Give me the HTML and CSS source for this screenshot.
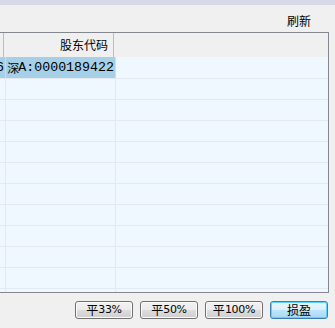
FILE: index.html
```html
<!DOCTYPE html>
<html>
<head>
<meta charset="utf-8">
<link rel="stylesheet" href="styles.css">
</head>
<body>
<div class="topbar"></div>
<div class="toolbar"><span class="refresh">刷新</span></div>
<div class="grid">
  <div class="hdr">
    <div class="h1"></div>
    <div class="h2">股东代码</div>
    <div class="h3"></div>
  </div>
  <div class="rows">
    <div class="row first">
      <div class="c1 sel cut"><span>6</span></div>
      <div class="c2 sel"><span class="cjk">深</span><span class="mono">A:0000189422</span></div>
      <div class="c3"></div>
    </div>
    <div class="row"><div class="c1"></div><div class="c2"></div><div class="c3"></div></div>
    <div class="row"><div class="c1"></div><div class="c2"></div><div class="c3"></div></div>
    <div class="row"><div class="c1"></div><div class="c2"></div><div class="c3"></div></div>
    <div class="row"><div class="c1"></div><div class="c2"></div><div class="c3"></div></div>
    <div class="row"><div class="c1"></div><div class="c2"></div><div class="c3"></div></div>
    <div class="row"><div class="c1"></div><div class="c2"></div><div class="c3"></div></div>
    <div class="row"><div class="c1"></div><div class="c2"></div><div class="c3"></div></div>
    <div class="row"><div class="c1"></div><div class="c2"></div><div class="c3"></div></div>
    <div class="row"><div class="c1"></div><div class="c2"></div><div class="c3"></div></div>
    <div class="row"><div class="c1"></div><div class="c2"></div><div class="c3"></div></div>
    <div class="row"><div class="c1"></div><div class="c2"></div><div class="c3"></div></div>
  </div>
</div>
<div class="btns">
  <button class="btn"><span class="cjk">平</span><span class="lat">33%</span></button>
  <button class="btn"><span class="cjk">平</span><span class="lat">50%</span></button>
  <button class="btn"><span class="cjk">平</span><span class="lat">100%</span></button>
  <button class="btn focus"><span class="cjk">损盈</span></button>
</div>
</body>
</html>
```
FILE: styles.css
```css
html, body {
  margin: 0;
  padding: 0;
}
body {
  width: 335px;
  height: 328px;
  overflow: hidden;
  background: #f0f0f0;
  font-family: "Noto Sans CJK SC", "Liberation Sans", sans-serif;
  font-size: 12px;
  color: #000;
}
.topbar {
  height: 5px;
  background: #d8d9e8;
}
.toolbar {
  height: 27px;
  box-sizing: border-box;
  padding: 9px 24px 0 0;
  line-height: 14px;
  display: flex;
  justify-content: flex-end;
}
.grid {
  height: 261px;
  box-sizing: border-box;
  margin-right: 6px;
  border-top: 1px solid #828790;
  border-right: 1px solid #828790;
  border-bottom: 1px solid #828790;
  overflow: hidden;
  display: flex;
  flex-direction: column;
}
.hdr {
  height: 24px;
  flex: none;
  display: grid;
  grid-template-columns: 4px 110px 1fr;
  background: #f0f0f0;
  line-height: 24px;
}
.h1, .h2 {
  border-right: 1px solid #bdbdbd;
}
.h2 {
  text-align: right;
  padding-right: 5px;
}
.rows {
  flex: 1;
  background: #f0f8ff;
  overflow: hidden;
}
.row {
  height: 20px;
  display: grid;
  grid-template-columns: 6px 110px 1fr;
  border-bottom: 1px solid #e4e9ef;
}
.row.first {
  height: 21px;
}
.c1, .c2 {
  border-right: 1px solid #e4e9ef;
}
.sel {
  background: #a6d0e8;
  border-right-color: #c4e0f0;
}
.c1.cut {
  overflow: hidden;
  display: flex;
  justify-content: flex-end;
  align-items: center;
}
.c1.cut span,
.c2 .mono {
  font-family: "Liberation Mono", monospace;
  font-size: 13.3px;
  line-height: 21px;
}
.c1.cut span {
  margin-right: 1px;
}
.c2.sel {
  display: flex;
  align-items: center;
  justify-content: flex-end;
  padding-right: 1px;
  white-space: nowrap;
  overflow: hidden;
}
.c2 .cjk {
  font-size: 12px;
  line-height: 21px;
  margin-right: -1px;
}
.btns {
  display: flex;
  justify-content: flex-end;
  gap: 7px;
  margin-top: 8px;
  padding-right: 7px;
}
.btn {
  width: 58px;
  height: 18px;
  padding: 0;
  margin: 0;
  box-sizing: border-box;
  border: 1px solid #707070;
  border-radius: 3px;
  background: linear-gradient(#f2f2f2 0%, #ebebeb 50%, #dddddd 50%, #cfcfcf 100%);
  box-shadow: inset 0 0 0 1px #fbfbfb;
  display: flex;
  align-items: center;
  justify-content: center;
  font-family: "Noto Sans CJK SC", "Liberation Sans", sans-serif;
  font-size: 12px;
  line-height: 14px;
  color: #000;
}
.btn .lat {
  font-family: "DejaVu Sans", sans-serif;
  font-size: 11px;
  letter-spacing: -0.3px;
}
.btn.focus {
  border-color: #3c7fb1;
  background: linear-gradient(#eaf6fd 0%, #d9f0fc 50%, #bee6fd 50%, #a7d9f5 100%);
  box-shadow: inset 0 0 0 1px #5fd2fa;
}
```
